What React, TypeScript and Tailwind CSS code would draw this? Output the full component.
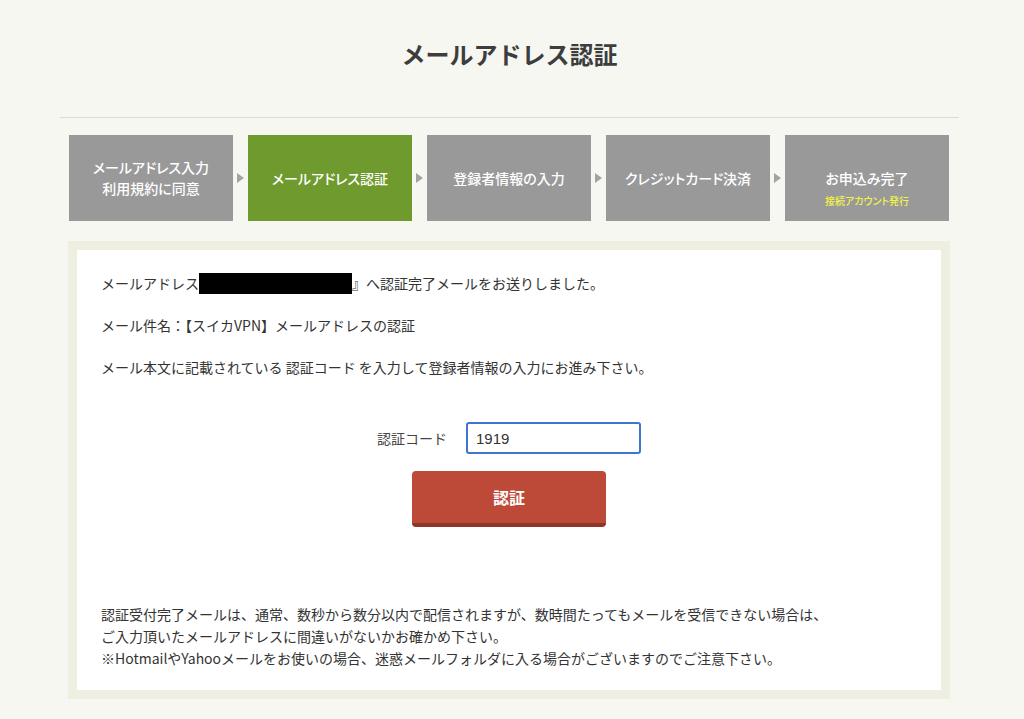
import React from 'react';

const font = "font-['Noto_Sans_CJK_JP','Noto_Sans',sans-serif]";

const steps: { label: string[]; active?: boolean; sub?: string }[] = [
  { label: ['メールアドレス入力', '利用規約に同意'] },
  { label: ['メールアドレス認証'], active: true },
  { label: ['登録者情報の入力'] },
  { label: ['クレジットカード決済'] },
  { label: ['お申込み完了'], sub: '接続アカウント発行' },
];

const Arrow: React.FC = () => (
  <div className="w-[15px] flex items-center justify-center">
    <svg width="8" height="10" viewBox="0 0 8 10" className="ml-[1px]">
      <path d="M0 0 L7 5 L0 10 Z" fill="#a3a3a3" />
    </svg>
  </div>
);

const App: React.FC = () => {
  return (
    <div className={`min-h-[719px] bg-[#f7f7f2] ${font} text-[#333]`}>
      <div className="ml-[60px] w-[899px] pt-[36px]">
        <h1 className="text-center text-[24px] leading-[36px] font-bold text-[#3d3d3d]">メールアドレス認証</h1>
        <div className="mt-[45px] border-t border-[#dcdcd4]" />

        <div className="ml-[9px] mt-[17px] flex [font-feature-settings:'palt']">
          {steps.map((s, i) => (
            <React.Fragment key={i}>
              {i > 0 && <Arrow />}
              <div
                className={`w-[164px] h-[86px] flex flex-col items-center text-white text-[14px] font-medium leading-[21px] ${
                  s.sub ? 'justify-start pt-[33px]' : 'justify-center'
                } ${s.active ? 'bg-[#6f9a2e]' : 'bg-[#999999]'}`}
              >
                {s.label.map((l) => (
                  <div key={l}>{l}</div>
                ))}
                {s.sub && <div className="mt-[5px] text-[10px] leading-[14px] text-[#f2f24a]">{s.sub}</div>}
              </div>
            </React.Fragment>
          ))}
        </div>

        <div className="ml-[8px] mt-[20px] w-[882px] border-[9px] border-[#eeeee1] bg-white">
          <div className="px-[24px] pt-[23px] pb-[21px] text-[14px] leading-[21px]">
            <p className="flex items-center">
              メールアドレス『<span className="inline-block w-[153px] h-[21px] bg-black -ml-[14px]" />』へ認証完了メールをお送りしました。
            </p>
            <p className="mt-[21px]">メール件名：【スイカVPN】メールアドレスの認証</p>
            <p className="mt-[21px]">メール本文に記載されている 認証コード を入力して登録者情報の入力にお進み下さい。</p>

            <div className="mt-[44px] flex items-center justify-center gap-[19px]">
              <span className="text-[#444]">認証コード</span>
              <input
                defaultValue="1919"
                className="w-[175px] h-[32px] rounded-[3px] border-2 border-[#3f74d6] px-[8px] text-[15px] text-[#333] outline-none font-['Liberation_Sans',sans-serif]"
              />
            </div>
            <div className="mt-[17px] flex justify-center">
              <button className="w-[194px] h-[56px] rounded-[4px] bg-[#bd4a39] border-b-[4px] border-[#8f3629] text-white text-[16px] font-bold">
                認証
              </button>
            </div>

            <div className="mt-[76px] leading-[22px] text-[#333]">
              <p>認証受付完了メールは、通常、数秒から数分以内で配信されますが、数時間たってもメールを受信できない場合は、</p>
              <p>ご入力頂いたメールアドレスに間違いがないかお確かめ下さい。</p>
              <p>※HotmailやYahooメールをお使いの場合、迷惑メールフォルダに入る場合がございますのでご注意下さい。</p>
            </div>
          </div>
        </div>
      </div>
    </div>
  );
};

export default App;
